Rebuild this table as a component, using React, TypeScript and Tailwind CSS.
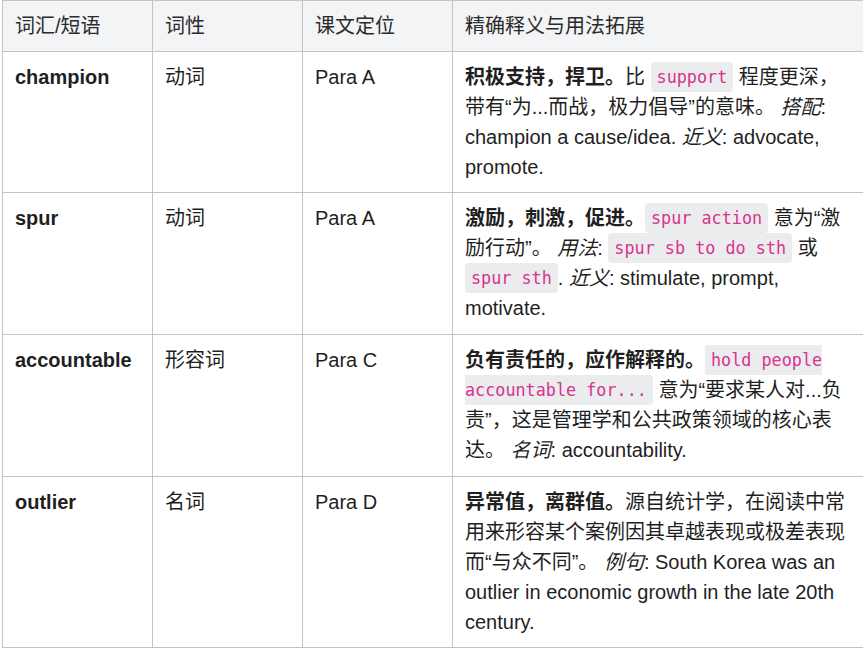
import React, { ReactNode } from "react";

const Code = ({ children }: { children: ReactNode }) => (
  <code className="rounded-[4px] bg-[#ebecee] px-[6px] py-[5px] align-[1px] font-['DejaVu_Sans_Mono',monospace] text-[16.8px] leading-none text-[#d9338f]">
    {children}
  </code>
);

const Em = ({ children }: { children: ReactNode }) => (
  <em className="italic">{children}</em>
);

type Row = {
  word: string;
  pos: string;
  para: string;
  hasCode: boolean;
  meaning: ReactNode;
};

const rows: Row[] = [
  {
    word: "champion",
    pos: "动词",
    para: "Para A",
    hasCode: false,
    meaning: (
      <>
        <strong className="font-bold">积极支持，捍卫。</strong>比{" "}
        <Code>support</Code> 程度更深，带有“为...而战，极力倡导”的意味。{" "}
        <Em>搭配</Em>: champion a cause/idea. <Em>近义</Em>: advocate,
        promote.
      </>
    ),
  },
  {
    word: "spur",
    pos: "动词",
    para: "Para A",
    hasCode: true,
    meaning: (
      <>
        <strong className="font-bold">激励，刺激，促进。</strong>
        <Code>spur action</Code> 意为“激励行动”。 <Em>用法</Em>:{" "}
        <Code>spur sb to do sth</Code> 或 <Code>spur sth</Code>.{" "}
        <Em>近义</Em>: stimulate, prompt, motivate.
      </>
    ),
  },
  {
    word: "accountable",
    pos: "形容词",
    para: "Para C",
    hasCode: true,
    meaning: (
      <>
        <strong className="font-bold">负有责任的，应作解释的。</strong>
        <Code>hold people accountable for...</Code>{" "}
        意为“要求某人对...负责”，这是管理学和公共政策领域的核心表达。{" "}
        <Em>名词</Em>: accountability.
      </>
    ),
  },
  {
    word: "outlier",
    pos: "名词",
    para: "Para D",
    hasCode: false,
    meaning: (
      <>
        <strong className="font-bold">异常值，离群值。</strong>
        源自统计学，在阅读中常用来形容某个案例因其卓越表现或极差表现而“与众不同”。{" "}
        <Em>例句</Em>: South Korea was an outlier in economic growth in the
        late 20th century.
      </>
    ),
  },
];

const headers = ["词汇/短语", "词性", "课文定位", "精确释义与用法拓展"];

export default function App() {
  return (
    <div className="h-[648px] w-full overflow-hidden bg-white">
      <table className="ml-[2px] w-[863px] table-fixed border-collapse font-['Liberation_Sans','Noto_Sans_CJK_SC',sans-serif] text-[20px] leading-[30px] text-[#1f1f1f]">
        <colgroup>
          <col className="w-[150px]" />
          <col className="w-[150px]" />
          <col className="w-[150px]" />
          <col className="w-[413px]" />
        </colgroup>
        <thead>
          <tr className="bg-[#f3f4f6]">
            {headers.map((h) => (
              <th
                key={h}
                className="border border-[#c4c4c4] px-3 py-[10px] text-left align-top font-normal text-[#2b2b2b]"
              >
                {h}
              </th>
            ))}
          </tr>
        </thead>
        <tbody>
          {rows.map((r) => (
            <tr key={r.word}>
              <td className="border border-[#c4c4c4] px-3 py-[10px] align-top font-bold">
                {r.word}
              </td>
              <td className="border border-[#c4c4c4] px-3 py-[10px] align-top">
                {r.pos}
              </td>
              <td className="border border-[#c4c4c4] px-3 py-[10px] align-top">
                {r.para}
              </td>
              <td
                className={
                  r.hasCode
                    ? "border border-[#c4c4c4] px-3 pt-[10px] pb-[11px] align-top"
                    : "border border-[#c4c4c4] px-3 py-[10px] align-top"
                }
              >
                {r.meaning}
              </td>
            </tr>
          ))}
        </tbody>
      </table>
    </div>
  );
}
